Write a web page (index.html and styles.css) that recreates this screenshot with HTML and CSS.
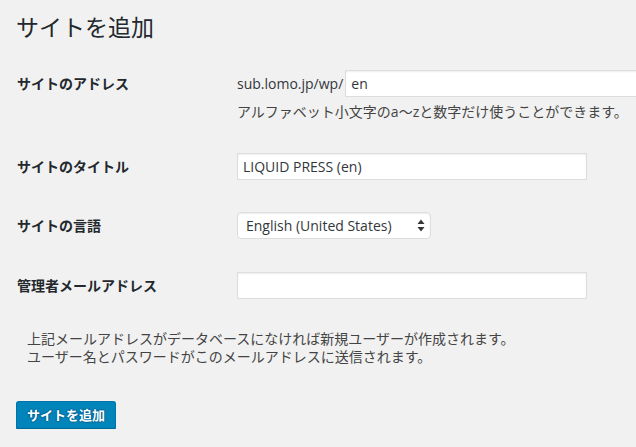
FILE: index.html
```html
<!DOCTYPE html>
<html lang="ja">
<head>
<meta charset="utf-8">
<title>サイトを追加</title>
<link rel="stylesheet" href="styles.css">
</head>
<body>
<div class="wrap">
  <h1 class="page-title">サイトを追加</h1>
  <form class="site-form">
    <div class="row row-address">
      <label class="row-label" for="site-address">サイトのアドレス</label>
      <div class="row-field">
        <div class="address-line">
          <span class="address-prefix">sub.lomo.jp/wp/</span>
          <input id="site-address" class="text-input address-input" type="text" value="en">
        </div>
        <p class="description">アルファベット小文字のa〜zと数字だけ使うことができます。</p>
      </div>
    </div>
    <div class="row row-title">
      <label class="row-label" for="site-title">サイトのタイトル</label>
      <div class="row-field">
        <input id="site-title" class="text-input wide-input" type="text" value="LIQUID PRESS (en)">
      </div>
    </div>
    <div class="row row-lang">
      <label class="row-label" for="site-lang">サイトの言語</label>
      <div class="row-field">
        <div class="select-wrap">
          <select id="site-lang" class="select-input">
            <option>English (United States)</option>
          </select>
          <svg class="select-arrows" width="8" height="13" viewBox="0 0 8 13" aria-hidden="true">
            <path d="M4 0.5 L7.5 5 L0.5 5 Z" fill="#32373c"/>
            <path d="M4 12.5 L7.5 8 L0.5 8 Z" fill="#32373c"/>
          </svg>
        </div>
      </div>
    </div>
    <div class="row row-email">
      <label class="row-label" for="admin-email">管理者メールアドレス</label>
      <div class="row-field">
        <input id="admin-email" class="text-input wide-input" type="text" value="">
      </div>
    </div>
    <p class="note">上記メールアドレスがデータベースになければ新規ユーザーが作成されます。<br>ユーザー名とパスワードがこのメールアドレスに送信されます。</p>
    <div class="actions">
      <button type="button" class="button-primary">サイトを追加</button>
    </div>
  </form>
</div>
</body>
</html>
```
FILE: styles.css
```css
html, body {
  margin: 0;
  padding: 0;
  background: #f1f1f1;
  overflow: hidden;
}

body {
  font-family: "Open Sans", "Noto Sans CJK JP", sans-serif;
  color: #23282d;
  font-size: 13px;
}

.wrap {
  padding: 0 0 0 17px;
}

.page-title {
  margin: 0 0 0 -1px;
  padding-top: 13px;
  font-size: 23px;
  line-height: 29px;
  font-weight: 400;
  color: #23282d;
}

.site-form {
  display: flex;
  flex-direction: column;
}

.row {
  display: grid;
  grid-template-columns: 220px 1fr;
  align-items: start;
}

.row-address { margin-top: 28px; }
.row-title { margin-top: 32px; }
.row-lang { margin-top: 32px; }
.row-email { margin-top: 33px; }

.row-label {
  font-size: 14px;
  font-weight: 700;
  line-height: 27px;
  color: #23282d;
}

.row-field {
  display: flex;
  flex-direction: column;
  min-width: 0;
}

.address-line {
  display: flex;
  align-items: center;
  gap: 2px;
  white-space: nowrap;
}

.address-prefix {
  font-size: 14px;
  color: #32373c;
}

.text-input {
  box-sizing: border-box;
  height: 27px;
  margin: 0;
  padding: 2px 5px;
  border: 1px solid #ddd;
  background: #fff;
  box-shadow: inset 0 1px 2px rgba(0, 0, 0, 0.07);
  font-family: "Open Sans", "Noto Sans CJK JP", sans-serif;
  font-size: 14px;
  color: #32373c;
  outline: none;
}

.address-input {
  flex: none;
  width: 320px;
}

.wide-input {
  width: 350px;
}

.description {
  margin: 5px 0 0;
  font-size: 14px;
  line-height: 19px;
  color: #444;
  white-space: nowrap;
}

.select-wrap {
  position: relative;
  width: 194px;
  height: 27px;
}

.select-input {
  appearance: none;
  -webkit-appearance: none;
  box-sizing: border-box;
  width: 194px;
  height: 27px;
  margin: 0;
  padding: 0 20px 0 8px;
  border: 1px solid #ddd;
  border-radius: 4px;
  background: #fff;
  box-shadow: inset 0 1px 2px rgba(0, 0, 0, 0.07);
  font-family: "Open Sans", "Noto Sans CJK JP", sans-serif;
  font-size: 14px;
  color: #32373c;
  outline: none;
}

.select-arrows {
  position: absolute;
  right: 6px;
  top: 7px;
  pointer-events: none;
}

.note {
  margin: 31px 0 0 10px;
  font-size: 14px;
  line-height: 18px;
  color: #444;
  white-space: nowrap;
}

.actions {
  margin-top: 35px;
}

.button-primary {
  box-sizing: border-box;
  margin: 0 0 0 -1px;
  width: 100px;
  height: 28px;
  padding: 0 10px 1px;
  border: 1px solid #0073aa;
  border-bottom-color: #006799;
  border-radius: 3px;
  background: #0085ba;
  box-shadow: 0 1px 0 #006799;
  color: #fff;
  text-shadow: 0 -1px 1px #006799, 1px 0 1px #006799, 0 1px 1px #006799, -1px 0 1px #006799;
  font-family: "Open Sans", "Noto Sans CJK JP", sans-serif;
  font-size: 13px;
  font-weight: 700;
  line-height: 26px;
  cursor: pointer;
}
```
